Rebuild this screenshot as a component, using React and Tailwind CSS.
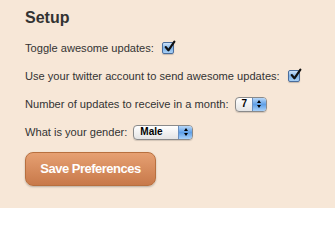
import React, { useState } from 'react';

function Checkbox({ checked, onChange }) {
  return (
    <button
      type="button"
      onClick={() => onChange(!checked)}
      className="relative w-[12px] h-[12px] rounded-[2px] border border-[#4a6d9c] bg-gradient-to-b from-[#cfe3f8] via-[#7fb3e8] to-[#a9d0f5] shadow-[0_1px_1px_rgba(0,0,0,0.2)]"
    >
      {checked && (
        <svg viewBox="0 0 12 12" className="absolute -top-[3px] left-[0px] w-[13px] h-[13px]">
          <path d="M2.5 6.5 L5 9.5 L10.5 1.5" fill="none" stroke="#111" strokeWidth="2" strokeLinecap="round" strokeLinejoin="round" />
        </svg>
      )}
    </button>
  );
}

function Select({ value, options, onChange, width }) {
  return (
    <div className={`relative h-[15px] ${width} rounded-[4px] border border-[#8a8a8a] bg-gradient-to-b from-white to-[#e4e4e4] shadow-[0_1px_1px_rgba(0,0,0,0.15)] overflow-hidden`}>
      <select
        value={value}
        onChange={(e) => onChange(e.target.value)}
        className="absolute inset-0 opacity-0 w-full"
      >
        {options.map((o) => (
          <option key={o}>{o}</option>
        ))}
      </select>
      <div className="flex h-full items-center">
        <span className="flex-1 pl-[6px] text-[10px] font-bold leading-none text-black">{value}</span>
        <span className="flex h-full w-[14px] flex-col items-center justify-center gap-[2px] bg-gradient-to-b from-[#b8d8f8] via-[#5f9fe6] to-[#a8d0f8] border-l border-[#6a8fbf]">
          <span className="block w-0 h-0 border-l-[2.5px] border-r-[2.5px] border-b-[3px] border-l-transparent border-r-transparent border-b-black" />
          <span className="block w-0 h-0 border-l-[2.5px] border-r-[2.5px] border-t-[3px] border-l-transparent border-r-transparent border-t-black" />
        </span>
      </div>
    </div>
  );
}

export default function App() {
  const [toggle, setToggle] = useState(true);
  const [twitter, setTwitter] = useState(true);
  const [count, setCount] = useState('7');
  const [gender, setGender] = useState('Male');

  return (
    <div className="w-[335px] h-[208px] bg-[#f7e7d7] pl-[25px] pt-[7px] text-[#333] font-['Liberation_Sans',sans-serif]">
      <h1 className="text-[16px] font-bold leading-[22px] text-[#333]">Setup</h1>

      <div className="mt-[11px] flex flex-col gap-[12px] text-[11.1px] leading-[16px]">
        <div className="flex items-center gap-[8px]">
          <span>Toggle awesome updates:</span>
          <Checkbox checked={toggle} onChange={setToggle} />
        </div>
        <div className="flex items-center gap-[8px]">
          <span>Use your twitter account to send awesome updates:</span>
          <Checkbox checked={twitter} onChange={setTwitter} />
        </div>
        <div className="flex items-center gap-[6px]">
          <span>Number of updates to receive in a month:</span>
          <Select value={count} onChange={setCount} width="w-[32px]" options={['1', '2', '3', '4', '5', '6', '7', '8', '9', '10']} />
        </div>
        <div className="flex items-center gap-[6px]">
          <span>What is your gender:</span>
          <Select value={gender} onChange={setGender} width="w-[60px]" options={['Male', 'Female']} />
        </div>
      </div>

      <button
        type="button"
        className="mt-[12px] w-[131px] h-[34px] rounded-[8px] border border-[#b8703f] bg-gradient-to-b from-[#e6a072] to-[#c8794a] text-white text-[13px] font-bold tracking-[-0.5px] shadow-[0_1px_2px_rgba(0,0,0,0.25)]"
      >
        Save Preferences
      </button>
    </div>
  );
}
